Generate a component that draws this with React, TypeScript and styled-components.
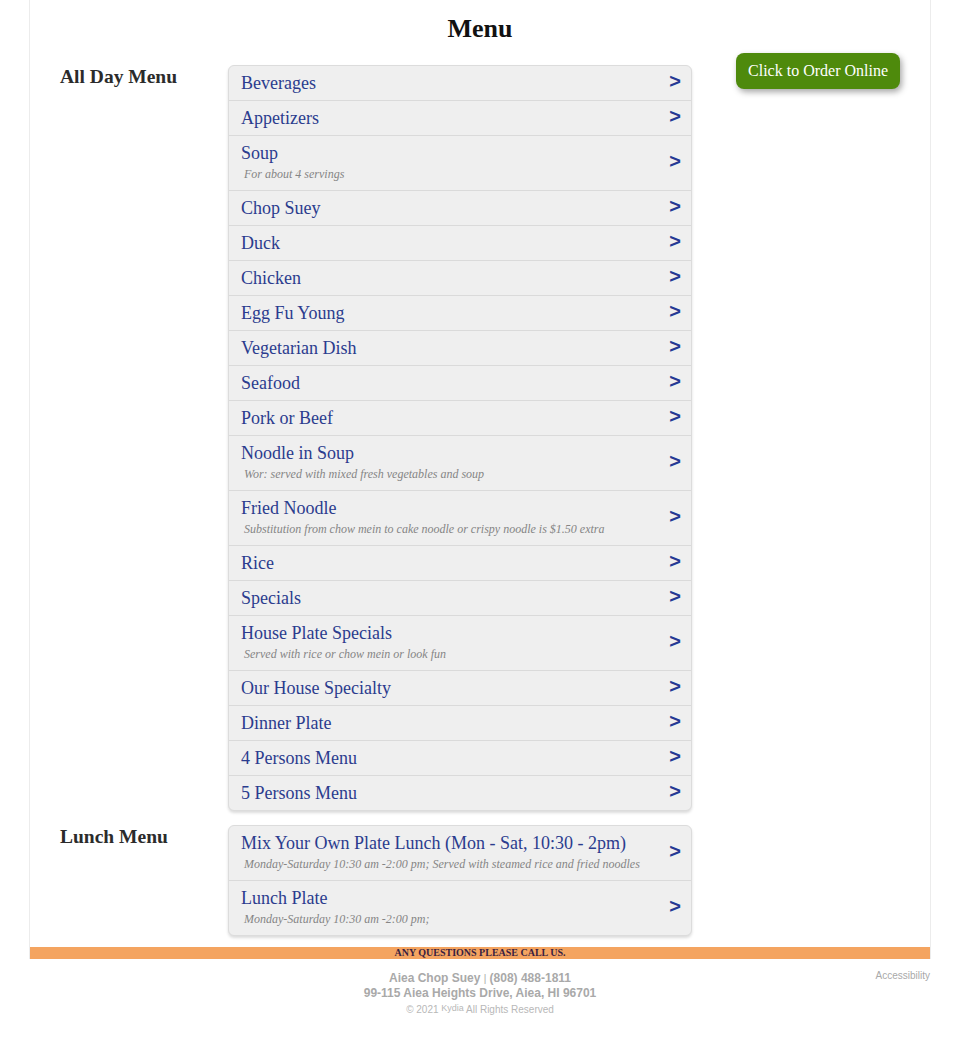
import styled, { createGlobalStyle } from "styled-components";

const GlobalStyle = createGlobalStyle`
  body {
    margin: 0;
    background: #fff;
    font-family: "Liberation Serif", "Times New Roman", serif;
  }
`;

const Page = styled.div`
  width: 900px;
  margin: 0 auto;
  border-left: 1px solid #ececec;
  border-right: 1px solid #ececec;
`;

const Title = styled.h1`
  margin: 0;
  padding-top: 13px;
  text-align: center;
  font-size: 26px;
  line-height: 32px;
  font-weight: bold;
  color: #111;
`;

const Body = styled.div`
  display: grid;
  grid-template-columns: 632px 208px;
  padding: 0 30px;
`;

const Sections = styled.div`
  display: flex;
  flex-direction: column;
  gap: 14px;
  padding-top: 20px;
  padding-bottom: 11px;
`;

const Section = styled.div`
  display: grid;
  grid-template-columns: 168px 464px;
`;

const SectionHeading = styled.h2`
  margin: 1px 0 0;
  font-size: 19.5px;
  line-height: 22px;
  font-weight: bold;
  color: #2b2b2b;
`;

const List = styled.div`
  background: #efefef;
  border: 1px solid #dcdcdc;
  border-radius: 6px;
  box-shadow: 0 2px 3px rgba(0, 0, 0, 0.14);
  overflow: hidden;
`;

const Row = styled.div`
  display: flex;
  align-items: center;
  justify-content: space-between;
  padding: 6px 10px 6px 12px;
  border-top: 1px solid #dadada;
  cursor: pointer;

  &:first-child {
    border-top: none;
  }
`;

const RowText = styled.div`
  display: flex;
  flex-direction: column;
`;

const ItemName = styled.span`
  font-size: 18px;
  line-height: 22px;
  color: #2b3c8e;
`;

const ItemNote = styled.span`
  font-size: 12px;
  line-height: 20px;
  font-style: italic;
  color: #858585;
  padding-left: 3px;
`;

const Arrow = styled.span`
  font-family: "Liberation Sans", Arial, sans-serif;
  font-weight: bold;
  font-size: 20px;
  line-height: 14px;
  color: #253893;
  margin-bottom: 4px;
`;

const Side = styled.div`
  display: flex;
  justify-content: flex-end;
  align-items: flex-start;
  padding-top: 8px;
`;

const OrderButton = styled.button`
  font-family: "Liberation Serif", "Times New Roman", serif;
  font-size: 16px;
  line-height: 20px;
  color: #fff;
  background: #4e8a0c;
  border: none;
  border-radius: 8px;
  padding: 8px 12px;
  box-shadow: 2px 3px 6px rgba(0, 0, 0, 0.35);
  cursor: pointer;
`;

const CallBar = styled.div`
  background: #f4a460;
  text-align: center;
  font-size: 10px;
  line-height: 12px;
  font-weight: bold;
  color: #3a1e40;
`;

const Footer = styled.footer`
  width: 902px;
  margin: 0 auto;
  padding-top: 12px;
  display: grid;
  grid-template-columns: 1fr auto 1fr;
  font-family: "Liberation Sans", Arial, sans-serif;
  color: #a9a9a9;
`;

const FooterCenter = styled.div`
  grid-column: 2;
  text-align: center;
`;

const FooterLine = styled.div`
  font-size: 12px;
  line-height: 14px;
  font-weight: bold;
`;

const Divider = styled.span`
  font-weight: normal;
  font-size: 10px;
`;

const Copyright = styled.div`
  font-size: 10px;
  line-height: 16px;
  color: #b8b8b8;
`;

const Brand = styled.span`
  font-size: 9px;
  vertical-align: 2px;
`;

const Accessibility = styled.a`
  justify-self: end;
  font-size: 10px;
  line-height: 14px;
  color: #a9a9a9;
  text-decoration: none;
  margin-top: -2px;
  margin-right: 1px;
`;

type Item = { name: string; note?: string };

const allDay: Item[] = [
  { name: "Beverages" },
  { name: "Appetizers" },
  { name: "Soup", note: "For about 4 servings" },
  { name: "Chop Suey" },
  { name: "Duck" },
  { name: "Chicken" },
  { name: "Egg Fu Young" },
  { name: "Vegetarian Dish" },
  { name: "Seafood" },
  { name: "Pork or Beef" },
  { name: "Noodle in Soup", note: "Wor: served with mixed fresh vegetables and soup" },
  { name: "Fried Noodle", note: "Substitution from chow mein to cake noodle or crispy noodle is $1.50 extra" },
  { name: "Rice" },
  { name: "Specials" },
  { name: "House Plate Specials", note: "Served with rice or chow mein or look fun" },
  { name: "Our House Specialty" },
  { name: "Dinner Plate" },
  { name: "4 Persons Menu" },
  { name: "5 Persons Menu" },
];

const lunch: Item[] = [
  {
    name: "Mix Your Own Plate Lunch (Mon - Sat, 10:30 - 2pm)",
    note: "Monday-Saturday 10:30 am -2:00 pm; Served with steamed rice and fried noodles",
  },
  { name: "Lunch Plate", note: "Monday-Saturday 10:30 am -2:00 pm;" },
];

function MenuSection({ title, items }: { title: string; items: Item[] }) {
  return (
    <Section>
      <SectionHeading>{title}</SectionHeading>
      <List>
        {items.map((item) => (
          <Row key={item.name}>
            <RowText>
              <ItemName>{item.name}</ItemName>
              {item.note && <ItemNote>{item.note}</ItemNote>}
            </RowText>
            <Arrow>&gt;</Arrow>
          </Row>
        ))}
      </List>
    </Section>
  );
}

export default function App() {
  return (
    <>
      <GlobalStyle />
      <Page>
        <Title>Menu</Title>
        <Body>
          <Sections>
            <MenuSection title="All Day Menu" items={allDay} />
            <MenuSection title="Lunch Menu" items={lunch} />
          </Sections>
          <Side>
            <OrderButton>Click to Order Online</OrderButton>
          </Side>
        </Body>
        <CallBar>ANY QUESTIONS PLEASE CALL US.</CallBar>
      </Page>
      <Footer>
        <FooterCenter>
          <FooterLine>
            Aiea Chop Suey <Divider>|</Divider> (808) 488-1811
          </FooterLine>
          <FooterLine>99-115 Aiea Heights Drive, Aiea, HI 96701</FooterLine>
          <Copyright>
            © 2021 <Brand>Kydia</Brand> All Rights Reserved
          </Copyright>
        </FooterCenter>
        <Accessibility href="#">Accessibility</Accessibility>
      </Footer>
    </>
  );
}
